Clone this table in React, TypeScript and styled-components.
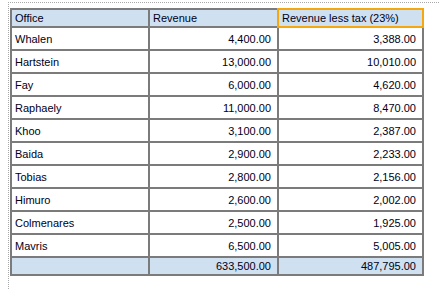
import React from 'react';
import styled, { createGlobalStyle } from 'styled-components';

const GlobalStyle = createGlobalStyle`
  html, body {
    margin: 0;
    padding: 0;
    background: #ffffff;
  }
  body {
    font-family: "Liberation Sans", Arial, sans-serif;
  }
`;

const Canvas = styled.div`
  margin: 2px 0 0 8px;
  min-height: 287px;
  box-sizing: border-box;
  border-left: 1px dotted #a8a8a8;
  border-top: 1px dotted #a8a8a8;
  padding: 5px 0 0 1px;
`;

const Grid = styled.div`
  display: grid;
  grid-template-columns: 136px 127px 143px;
  gap: 2px;
  padding: 2px;
  width: max-content;
  background: #7b7b7b;
`;

const Row = styled.div`
  display: contents;
`;

const Cell = styled.div<{ $header?: boolean; $num?: boolean; $focus?: boolean }>`
  display: flex;
  align-items: center;
  justify-content: ${p => (p.$num ? 'flex-end' : 'flex-start')};
  padding: 0 6px 0 3px;
  background: ${p => (p.$header ? '#cfe0f1' : '#ffffff')};
  color: #000018;
  font-size: 11px;
  white-space: nowrap;
  overflow: hidden;
  position: relative;
  outline: ${p => (p.$focus ? '2px solid #f5a70f' : 'none')};
  z-index: ${p => (p.$focus ? 1 : 0)};
`;

const rows = [
  ['Whalen', '4,400.00', '3,388.00'],
  ['Hartstein', '13,000.00', '10,010.00'],
  ['Fay', '6,000.00', '4,620.00'],
  ['Raphaely', '11,000.00', '8,470.00'],
  ['Khoo', '3,100.00', '2,387.00'],
  ['Baida', '2,900.00', '2,233.00'],
  ['Tobias', '2,800.00', '2,156.00'],
  ['Himuro', '2,600.00', '2,002.00'],
  ['Colmenares', '2,500.00', '1,925.00'],
  ['Mavris', '6,500.00', '5,005.00'],
];

const App: React.FC = () => {
  return (
    <>
      <GlobalStyle />
      <Canvas>
        <Grid style={{ gridTemplateRows: `16px repeat(${rows.length}, 21px) 16px` }}>
          <Row>
            <Cell $header>Office</Cell>
            <Cell $header>Revenue</Cell>
            <Cell $header $focus>Revenue less tax (23%)</Cell>
          </Row>
          {rows.map(r => (
            <Row key={r[0]}>
              <Cell>{r[0]}</Cell>
              <Cell $num>{r[1]}</Cell>
              <Cell $num>{r[2]}</Cell>
            </Row>
          ))}
          <Row>
            <Cell $header />
            <Cell $header $num>633,500.00</Cell>
            <Cell $header $num>487,795.00</Cell>
          </Row>
        </Grid>
      </Canvas>
    </>
  );
};

export default App;
